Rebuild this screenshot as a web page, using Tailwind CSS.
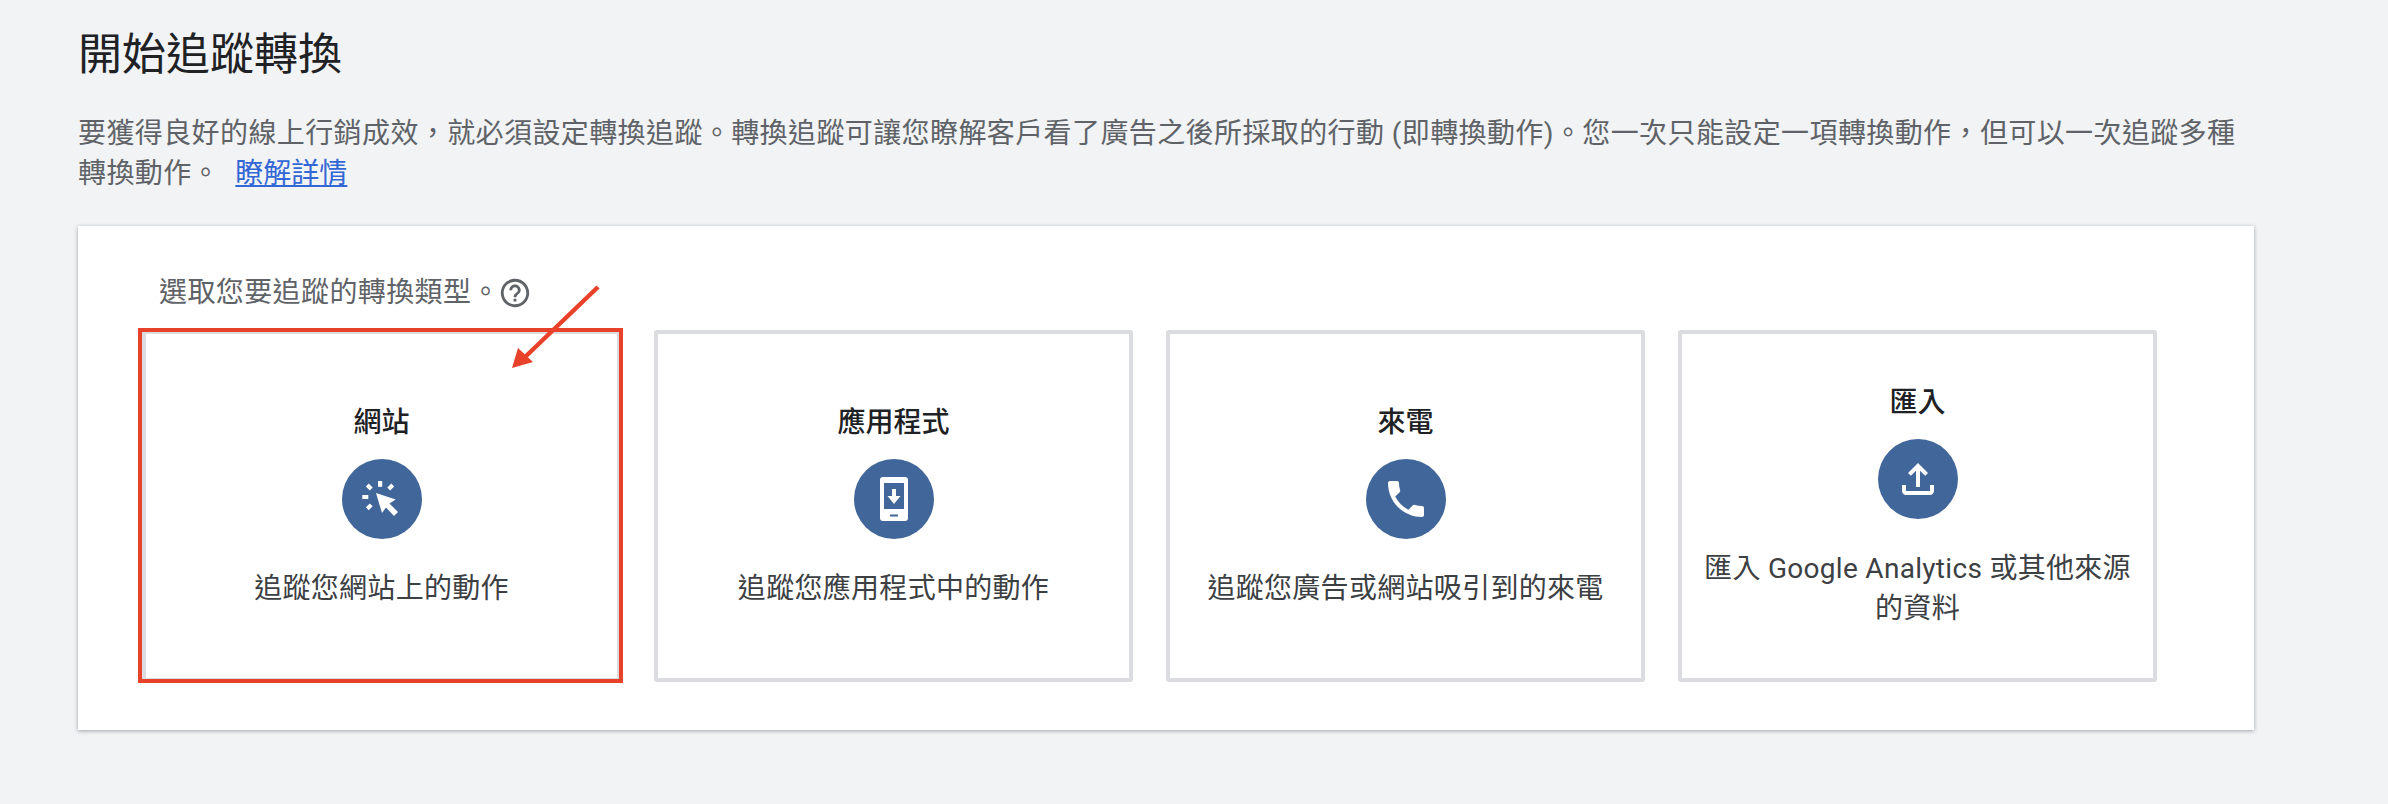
<!DOCTYPE html>
<html lang="zh-Hant">
<head>
  <meta charset="UTF-8">
  <title>開始追蹤轉換</title>
  <script src="https://cdn.jsdelivr.net/npm/@tailwindcss/browser@4"></script>
</head>
<body class="bg-[#f1f3f5] min-h-screen font-['Roboto','Noto_Sans_CJK_TC',sans-serif]">
  <div class="w-[2176px] ml-[78px] pt-[27px]">
    <h1 class="text-[44px] leading-[56px] font-normal text-[#202124]">開始追蹤轉換</h1>

    <p class="mt-[31px] text-[28px] leading-[40px] tracking-[0.4px] text-[#5f6368]">
      要獲得良好的線上行銷成效，就必須設定轉換追蹤。轉換追蹤可讓您瞭解客戶看了廣告之後所採取的行動 (即轉換動作)。您一次只能設定一項轉換動作，但可以一次追蹤多種轉換動作。
      <a href="#" class="ml-[8px] tracking-normal text-[#3367d6] underline">瞭解詳情</a>
    </p>

    <!-- Conversion type panel -->
    <div class="relative mt-[32px] bg-white pt-[47px] pb-[48px] pl-[64px] shadow-[0_1px_4px_rgba(60,64,67,0.45)]">
      <div class="flex items-center pl-[17px] text-[28px] leading-[40px] tracking-[0.4px] text-[#5f6368]">
        <span>選取您要追蹤的轉換類型。</span>
        <svg class="w-[34px] h-[34px] -ml-[2px]" viewBox="0 0 24 24" fill="#5f6368"><path d="M11 18h2v-2h-2v2zm1-16C6.48 2 2 6.48 2 12s4.48 10 10 10 10-4.48 10-10S17.52 2 12 2zm0 18c-4.41 0-8-3.59-8-8s3.59-8 8-8 8 3.59 8 8-3.59 8-8 8zm0-14c-2.21 0-4 1.79-4 4h2c0-1.1.9-2 2-2s2 .9 2 2c0 2-3 1.75-3 5h2c0-2.25 3-2.5 3-5 0-2.21-1.79-4-4-4z"/></svg>
      </div>

      <div class="mt-[17px] flex gap-[33px]">
        <!-- Website -->
        <div class="relative w-[479px] h-[352px] border-4 border-[#dadce0] rounded-[3px] px-[16px] flex flex-col items-center justify-center text-center">
          <h3 class="text-[28px] leading-[40px] font-medium text-[#202124]">網站</h3>
          <div class="mt-[16px] w-[80px] h-[80px] rounded-full bg-[#41669a]">
            <svg class="w-[80px] h-[80px]" viewBox="0 0 80 80" fill="#fff">
              <path d="M34 34 53.7 40.5 47.5 44.5 56 53 52 57 44 48.5 40 54z"/>
              <rect x="36" y="22" width="4.2" height="5.8"/>
              <rect x="20.3" y="36" width="6" height="4"/>
              <rect x="25.3" y="25.2" width="4" height="5.6" transform="rotate(-45 27.3 28)"/>
              <rect x="46.7" y="25.2" width="4" height="5.6" transform="rotate(45 48.7 28)"/>
              <rect x="25.3" y="45" width="4" height="5.6" transform="rotate(45 27.3 47.8)"/>
            </svg>
          </div>
          <p class="mt-[30px] text-[28px] leading-[40px] tracking-[0.3px] text-[#3c4043]">追蹤您網站上的動作</p>
          <!-- red annotation box -->
          <div class="absolute -left-[8px] -top-[6px] -right-[6px] -bottom-[5px] border-4 border-[#e8432a]"></div>
        </div>

        <!-- App -->
        <div class="w-[479px] h-[352px] border-4 border-[#dadce0] rounded-[3px] px-[16px] flex flex-col items-center justify-center text-center">
          <h3 class="text-[28px] leading-[40px] font-medium text-[#202124]">應用程式</h3>
          <div class="mt-[16px] w-[80px] h-[80px] rounded-full bg-[#41669a]">
            <svg class="w-[80px] h-[80px]" viewBox="0 0 80 80" fill="#fff">
              <path fill-rule="evenodd" d="M29 18h22a3 3 0 0 1 3 3v38a3 3 0 0 1-3 3H29a3 3 0 0 1-3-3V21a3 3 0 0 1 3-3zm1 6v26h20V24zm6 31.5v2h8v-2z"/>
              <path d="M38 30h4v7h4.5L40 45l-6.500-8H38z"/>
            </svg>
          </div>
          <p class="mt-[30px] text-[28px] leading-[40px] tracking-[0.3px] text-[#3c4043]">追蹤您應用程式中的動作</p>
        </div>

        <!-- Calls -->
        <div class="w-[479px] h-[352px] border-4 border-[#dadce0] rounded-[3px] px-[16px] flex flex-col items-center justify-center text-center">
          <h3 class="text-[28px] leading-[40px] font-medium text-[#202124]">來電</h3>
          <div class="mt-[16px] w-[80px] h-[80px] rounded-full bg-[#41669a] flex items-center justify-center">
            <svg class="w-[48px] h-[48px]" viewBox="0 0 24 24" fill="#fff"><path d="M6.62 10.79c1.44 2.83 3.76 5.14 6.59 6.59l2.2-2.2c.27-.27.67-.36 1.02-.24 1.12.37 2.33.57 3.57.57.55 0 1 .45 1 1V20c0 .55-.45 1-1 1-9.39 0-17-7.61-17-17 0-.55.45-1 1-1h3.5c.55 0 1 .45 1 1 0 1.25.2 2.45.57 3.57.11.35.03.74-.25 1.02l-2.2 2.2z"/></svg>
          </div>
          <p class="mt-[30px] text-[28px] leading-[40px] tracking-[0.3px] text-[#3c4043]">追蹤您廣告或網站吸引到的來電</p>
        </div>

        <!-- Import -->
        <div class="w-[479px] h-[352px] border-4 border-[#dadce0] rounded-[3px] px-[16px] flex flex-col items-center justify-center text-center">
          <h3 class="text-[28px] leading-[40px] font-medium text-[#202124]">匯入</h3>
          <div class="mt-[16px] w-[80px] h-[80px] rounded-full bg-[#41669a] flex items-center justify-center">
            <svg class="w-[48px] h-[48px]" viewBox="0 0 24 24" fill="#fff"><path d="M18 15v3H6v-3H4v3c0 1.100.9 2 2 2h12c1.100 0 2-.9 2-2v-3h-2zM7 9l1.410 1.410L11 7.830V16h2V7.830l2.590 2.580L17 9l-5-5-5 5z"/></svg>
          </div>
          <p class="mt-[30px] text-[28px] leading-[40px] tracking-[0.3px] text-[#3c4043]">匯入 Google Analytics 或其他來源的資料</p>
        </div>
      </div>

      <!-- red annotation arrow -->
      <svg class="absolute left-[422px] top-[50px] w-[110px] h-[100px]" viewBox="0 0 110 100">
        <path d="M98 11 24 82" stroke="#e8432a" stroke-width="4.500" fill="none"/>
        <path d="M12 92 18 72 33 86z" fill="#e8432a"/>
      </svg>
    </div>
  </div>
</body>
</html>
